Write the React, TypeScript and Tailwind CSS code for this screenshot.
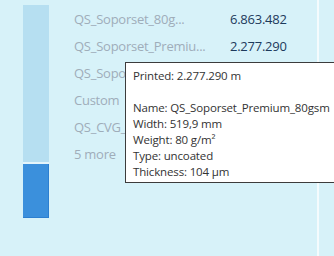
const font = { fontFamily: '"Open Sans", "Noto Sans", sans-serif' };

const rows: { label: string; value?: string }[] = [
  { label: "QS_Soporset_80g...", value: "6.863.482" },
  { label: "QS_Soporset_Premiu...", value: "2.277.290" },
  { label: "QS_Soporset_90g..." },
  { label: "Custom" },
  { label: "QS_CVG_Paper..." },
  { label: "5 more" },
];

export default function App() {
  return (
    <div
      className="relative flex h-[256px] w-[334px] overflow-hidden bg-[#d7f2f9]"
      style={font}
    >
      {/* stacked bar */}
      <div className="ml-[23px] mt-[5px] flex w-[26px] flex-col">
        <div className="h-[157px] bg-[#b6dff1]" />
        <div className="h-[2px] bg-[#e4f5fb]" />
        <div className="h-[54px] border-b border-r border-[#2c7fd0] bg-[#3b90dc]" />
      </div>

      {/* legend */}
      <div className="ml-[25px] mt-[6px] flex flex-col">
        {rows.map((r) => (
          <div key={r.label} className="flex h-[27px] items-center text-[13px] tracking-[-0.25px]">
            <span className="w-[156px] whitespace-nowrap text-[#9fadb9]">{r.label}</span>
            {r.value && <span className="text-[#1d3a5c]">{r.value}</span>}
          </div>
        ))}
      </div>

      {/* divider */}
      <div className="absolute left-[317px] top-0 h-full w-[2px] bg-[#f4fbfd]" />

      {/* tooltip */}
      <div className="absolute left-[125px] top-[62px] h-[121px] w-[240px] border border-[#3c3c3c] bg-white pl-[7px] pt-[5px] text-[11.5px] leading-[16px] tracking-[-0.15px] text-[#333333]">
        <div>Printed: 2.277.290 m</div>
        <div>&nbsp;</div>
        <div>Name: QS_Soporset_Premium_80gsm</div>
        <div>Width: 519,9 mm</div>
        <div>Weight: 80 g/m²</div>
        <div>Type: uncoated</div>
        <div>Thickness: 104 µm</div>
      </div>
    </div>
  );
}
